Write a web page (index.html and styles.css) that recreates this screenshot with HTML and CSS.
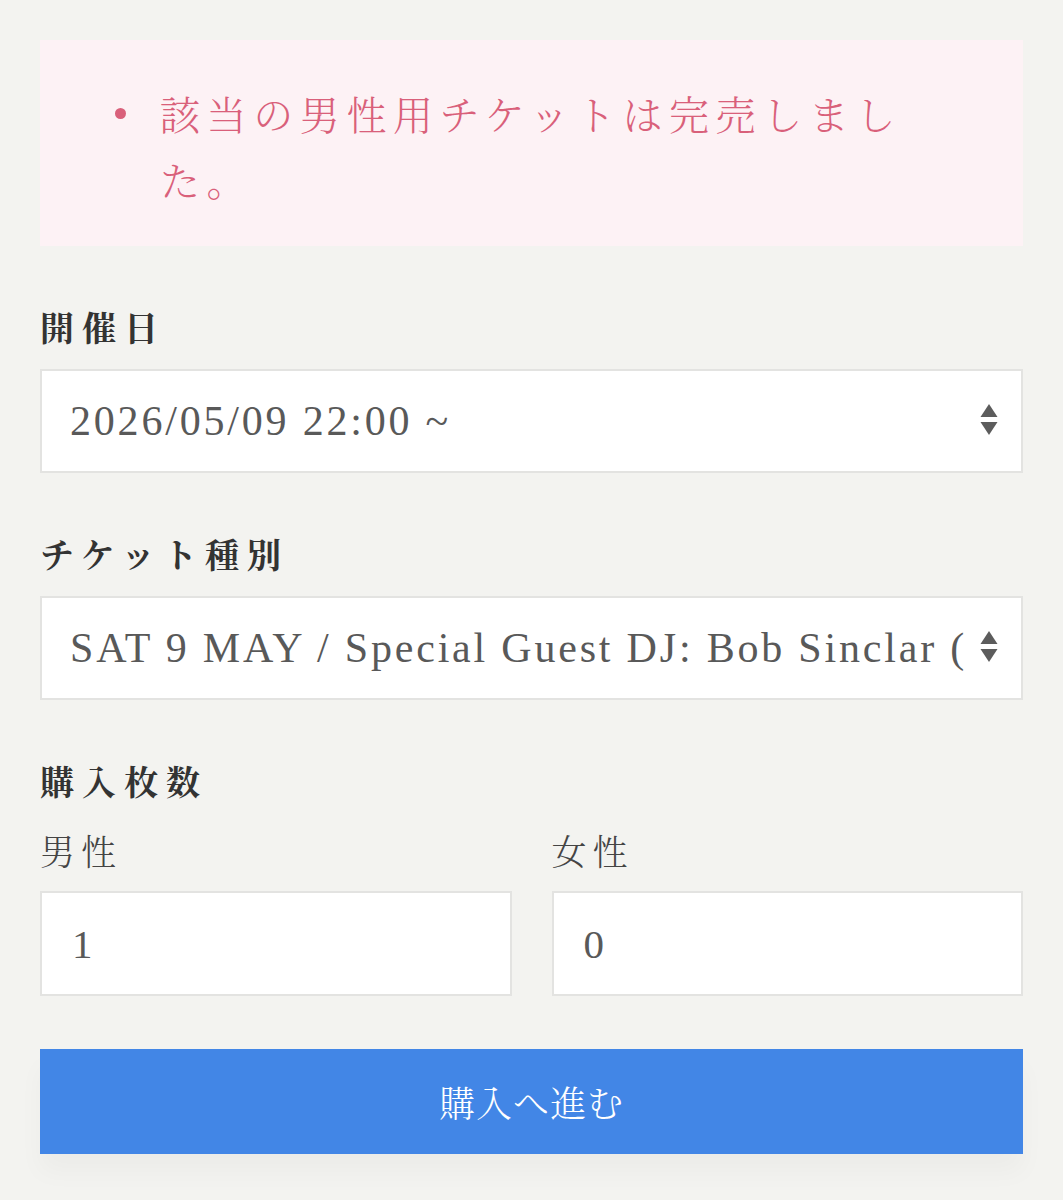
FILE: index.html
```html
<!DOCTYPE html>
<html lang="ja">
<head>
<meta charset="utf-8">
<title>チケット購入</title>
<link rel="stylesheet" href="styles.css">
</head>
<body>
<main class="page">
  <div class="alert">
    <ul class="alert-list">
      <li class="alert-item">該当の男性用チケットは完売しました。</li>
    </ul>
  </div>

  <form class="form">
    <div class="field">
      <label class="field-label" for="date">開催日</label>
      <div class="select-wrap">
        <select id="date" class="select">
          <option>2026/05/09 22:00 ~</option>
        </select>
        <svg class="select-arrows" viewBox="0 0 18 32" width="18" height="32" aria-hidden="true">
          <path d="M9 0 L17.5 13 L0.5 13 Z" fill="#5c5c5c"/>
          <path d="M0.5 18 L17.5 18 L9 31 Z" fill="#5c5c5c"/>
        </svg>
      </div>
    </div>

    <div class="field">
      <label class="field-label" for="type">チケット種別</label>
      <div class="select-wrap">
        <select id="type" class="select">
          <option>SAT 9 MAY / Special Guest DJ: Bob Sinclar (男性)</option>
        </select>
        <svg class="select-arrows" viewBox="0 0 18 32" width="18" height="32" aria-hidden="true">
          <path d="M9 0 L17.5 13 L0.5 13 Z" fill="#5c5c5c"/>
          <path d="M0.5 18 L17.5 18 L9 31 Z" fill="#5c5c5c"/>
        </svg>
      </div>
    </div>

    <div class="field">
      <div class="field-label">購入枚数</div>
      <div class="qty-grid">
        <div class="qty">
          <label class="qty-label" for="male">男性</label>
          <input id="male" class="input" type="text" value="1">
        </div>
        <div class="qty">
          <label class="qty-label" for="female">女性</label>
          <input id="female" class="input" type="text" value="0">
        </div>
      </div>
    </div>

    <button type="button" class="submit">購入へ進む</button>
  </form>
</main>
</body>
</html>
```

FILE: styles.css
```css
* {
  box-sizing: border-box;
}

html, body {
  margin: 0;
  padding: 0;
  background: #f3f3f0;
}

body {
  font-family: "Noto Serif CJK JP", "Liberation Serif", "Noto Sans CJK JP", serif;
  color: #333;
}

.page {
  padding: 40px;
}

.alert {
  background: #fdf2f5;
  padding: 40px 100px 34px 80px;
  height: 206px;
}

.alert-list {
  margin: 0;
  padding-left: 40px;
  list-style: none;
  color: #d9607a;
  font-size: 40px;
  line-height: 66px;
  letter-spacing: 6.6px;
  font-family: "Noto Serif CJK JP", "Noto Sans CJK JP", sans-serif;
  font-weight: 300;
}

.alert-item {
  position: relative;
}

.alert-item::before {
  content: "";
  position: absolute;
  left: -45px;
  top: 28px;
  width: 11px;
  height: 11px;
  border-radius: 50%;
  background: #d9607a;
}

.form {
  display: block;
}

.field {
  margin-top: 56px;
}

.field-label {
  display: block;
  font-family: "Noto Serif CJK JP", "Noto Sans CJK JP", sans-serif;
  font-weight: 700;
  font-size: 34px;
  line-height: 50px;
  letter-spacing: 8px;
  color: #333;
  margin-bottom: 17px;
}

.select-wrap {
  position: relative;
}

.select {
  display: block;
  width: 100%;
  height: 104px;
  margin: 0;
  padding: 0 53px 0 28px;
  border: 2px solid #e3e3e1;
  border-radius: 0;
  background: #fff;
  -webkit-appearance: none;
  appearance: none;
  font-family: "Liberation Serif", "Noto Sans CJK JP", serif;
  font-size: 42px;
  letter-spacing: 2.8px;
  color: #595959;
  outline: none;
}

.select-arrows {
  position: absolute;
  right: 25px;
  top: 35px;
  pointer-events: none;
}

.qty-grid {
  display: grid;
  grid-template-columns: 1fr 1fr;
  column-gap: 40px;
}

.qty-label {
  display: block;
  font-family: "Noto Serif CJK JP", "Noto Sans CJK JP", sans-serif;
  font-weight: 300;
  font-size: 35px;
  line-height: 50px;
  letter-spacing: 6px;
  color: #444;
  margin-top: 2px;
  margin-bottom: 16px;
}

.input {
  display: block;
  width: 100%;
  height: 105px;
  margin: 0;
  padding: 0 28px 0 30px;
  border: 2px solid #e3e3e1;
  border-radius: 0;
  background: #fff;
  font-family: "Liberation Serif", serif;
  font-size: 41px;
  color: #595959;
  outline: none;
}

.submit {
  display: block;
  width: 100%;
  height: 105px;
  margin: 53px 0 0;
  border: 0;
  border-radius: 0;
  background: #4286e6;
  color: #fff;
  font-family: "Noto Serif CJK JP", "Noto Sans CJK JP", sans-serif;
  font-weight: 300;
  font-size: 36px;
  letter-spacing: 1px;
  box-shadow: 0 18px 24px rgba(0, 0, 0, 0.03);
  cursor: pointer;
}
```
